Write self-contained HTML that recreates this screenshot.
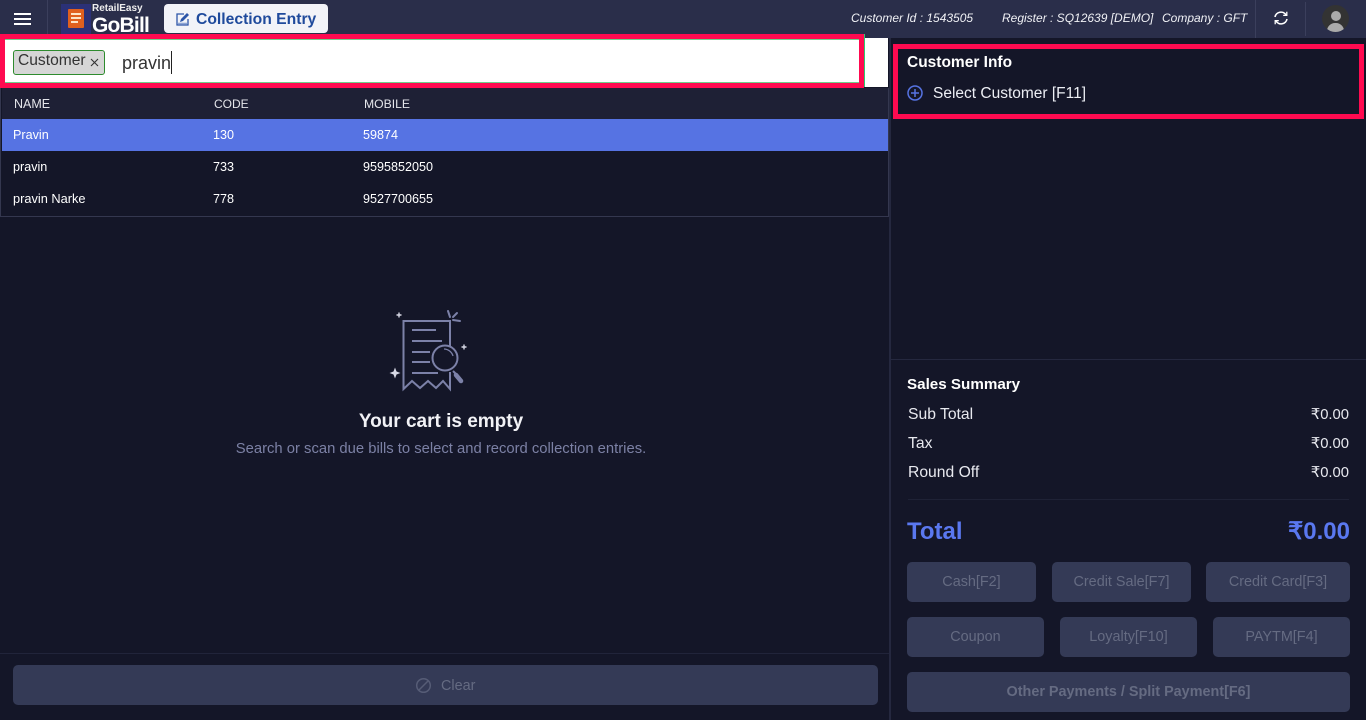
<!DOCTYPE html>
<html><head><meta charset="utf-8"><title>Collection Entry</title>
<style>
html,body{margin:0;padding:0;width:1366px;height:720px;overflow:hidden;background:#141628;font-family:"Liberation Sans",sans-serif;color:#fff}
.a{position:absolute}
.t{position:absolute;white-space:nowrap;line-height:20px}
.btn{position:absolute;background:#343a56;border-radius:5px;color:#656b82;font-size:14.4px;text-align:center;height:40px;line-height:40px;white-space:nowrap}
.r{position:absolute;white-space:nowrap;line-height:20px;text-align:right;right:17px;font-size:14.8px;color:#e8e9ef}
</style></head><body>
<div class="a" style="left:0;top:0;width:1366px;height:38px;background:#2a2e4a"></div>
<div class="a" style="left:47px;top:0;width:1px;height:34px;background:#3b3f5c"></div>
<div class="a" style="left:14px;top:13px;width:17px;height:2px;background:#fff"></div>
<div class="a" style="left:14px;top:18px;width:17px;height:2px;background:#fff"></div>
<div class="a" style="left:14px;top:23px;width:17px;height:2px;background:#fff"></div>
<div class="a" style="left:61px;top:4px;width:30px;height:30px;background:#2b3177"></div>
<div class="a" style="left:68px;top:9px;width:16px;height:19px;background:#e0601f;border-radius:1px"></div>
<div class="a" style="left:71px;top:13px;width:10px;height:2px;background:#fde4c8"></div>
<div class="a" style="left:71px;top:17px;width:10px;height:2px;background:#fde4c8"></div>
<div class="a" style="left:71px;top:21px;width:7px;height:2px;background:#fde4c8"></div>
<div class="t" style="left:92px;top:-1px;font-size:10px;font-weight:bold;color:#eee">RetailEasy</div>
<div class="t" style="left:92px;top:16px;font-size:21px;font-weight:bold;letter-spacing:-.8px;color:#fff">GoBill</div>
<div class="a" style="left:164px;top:4px;width:164px;height:29px;background:#f2f3f8;border-radius:4px"></div>
<svg class="a" style="left:175px;top:11px" width="16" height="16" viewBox="0 0 16 16" fill="none"><path d="M13 8v6H2V3h7" stroke="#2c55a8" stroke-width="1.3"/><path d="M5 11l1-3 6-6 2 2-6 6z" fill="#2c55a8"/><path d="M3 12.5h9" stroke="#8fa5d4" stroke-width="1.6"/></svg>
<div class="t" style="left:196px;top:10px;font-size:15.7px;font-weight:bold;color:#1f4a9c">Collection Entry</div>
<div class="t" style="left:851px;top:8px;font-size:12px;font-style:italic;color:#f0f1f5">Customer Id : 1543505</div>
<div class="t" style="left:1002px;top:8px;font-size:12px;font-style:italic;color:#f0f1f5">Register : SQ12639 [DEMO]</div>
<div class="t" style="left:1162px;top:8px;font-size:12px;font-style:italic;color:#f0f1f5">Company : GFT</div>
<div class="a" style="left:1255px;top:0;width:1px;height:38px;background:#3b3f5c"></div>
<div class="a" style="left:1305px;top:2px;width:1px;height:34px;background:#3b3f5c"></div>
<svg class="a" style="left:1273px;top:10px" width="16" height="16" viewBox="0 0 16 16" fill="none" stroke="#fff" stroke-width="1.6"><path d="M2 7a6 6 0 0 1 11-2"/><path d="M14 9a6 6 0 0 1-11 2"/><path d="M13.8 1.8v3.6h-3.6M2.2 14.2v-3.6h3.6" stroke-width="1.3"/></svg>
<div class="a" style="left:1322px;top:5px;width:27px;height:27px;border-radius:50%;background:#333;overflow:hidden">
<div class="a" style="left:9px;top:6px;width:10px;height:10px;border-radius:50%;background:#aaa"></div>
<div class="a" style="left:5px;top:18px;width:17px;height:12px;border-radius:8px 8px 0 0;background:#aaa"></div></div>

<div class="a" style="left:864px;top:38px;width:24px;height:49px;background:#fff"></div>
<div class="a" style="left:864px;top:34px;width:1px;height:53px;background:#2ecc71"></div>
<div class="a" style="left:0;top:34px;width:864px;height:54px;background:#ff0a50"></div>
<div class="a" style="left:5px;top:39px;width:854px;height:44px;background:#fff;border-top:1px solid #6fd08c;border-bottom:1px solid #6fd08c;box-sizing:border-box"></div>
<div class="a" style="left:13px;top:50px;width:90px;height:23px;background:#d6d6d6;border:1px solid #2e8b2e;border-radius:3px"></div>
<div class="t" style="left:18px;top:51px;font-size:15.6px;color:#333">Customer</div>
<svg class="a" style="left:90px;top:58px" width="9" height="9" viewBox="0 0 9 9" stroke="#333" stroke-width="1.1"><path d="M1 1l7 7M8 1l-7 7"/></svg>
<div class="t" style="left:122px;top:53px;font-size:18px;color:#333">pravin</div>
<div class="a" style="left:171px;top:51px;width:1px;height:23px;background:#222"></div>

<div class="a" style="left:0;top:88px;width:889px;height:129px;box-sizing:border-box;border:1px solid #34374f;border-top:0;background:#141628"></div>
<div class="a" style="left:2px;top:88px;width:886px;height:31px;background:#1e2035"></div>
<div class="a" style="left:2px;top:119px;width:886px;height:32px;background:#5673e3"></div>
<div class="t" style="left:14px;top:94px;font-size:12.5px;color:#e4e5ea">NAME</div>
<div class="t" style="left:214px;top:94px;font-size:12px;color:#e4e5ea">CODE</div>
<div class="t" style="left:364px;top:94px;font-size:12.2px;color:#e4e5ea">MOBILE</div>
<div class="t" style="left:13px;top:125px;font-size:12.6px;color:#fff">Pravin</div>
<div class="t" style="left:213px;top:125px;font-size:12.6px;color:#fff">130</div>
<div class="t" style="left:363px;top:125px;font-size:12.6px;color:#fff">59874</div>
<div class="t" style="left:13px;top:157px;font-size:12.6px">pravin</div>
<div class="t" style="left:213px;top:157px;font-size:12.6px">733</div>
<div class="t" style="left:363px;top:157px;font-size:12.6px">9595852050</div>
<div class="t" style="left:13px;top:189px;font-size:12.8px">pravin Narke</div>
<div class="t" style="left:213px;top:189px;font-size:12.6px">778</div>
<div class="t" style="left:363px;top:189px;font-size:12.6px">9527700655</div>

<svg class="a" style="left:370px;top:300px" width="110" height="100" viewBox="0 0 110 100" fill="none" stroke="#7c81a8" stroke-width="2">
<path d="M80 46V21H33.500V89L42 81l8 7 8-7 8 7 7-7 7 8V72"/>
<path d="M42 30h24M42 41h30M42 52h18M42 62h18M42 73h26"/>
<circle cx="75" cy="58" r="12.500"/>
<path d="M74 49a9.500 9.500 0 0 1 9 7" stroke-width="1.300"/>
<path d="M83 71l3 3" stroke-width="2"/>
<path d="M86 75l5 6" stroke-width="4.500" stroke-linecap="round"/>
<path d="M78 11l2 6M87 13l-4 4M90 21l-7-1" stroke-width="2" stroke-linecap="round"/>
<path d="M29 12.500v5M26.500 15h5M94 44.500v5M91.500 47h5" stroke="#d8d9e6" stroke-width="1.400"/>
<path d="M25 67.500l1.500 4 4 1.500-4 1.500-1.500 4-1.500-4-4-1.500 4-1.500z" fill="#d8d9e6" stroke="none"/>
</svg>
<div class="t" style="left:0;top:412px;width:882px;text-align:center;font-size:19px;font-weight:bold;color:#f2f2f6">Your cart is empty</div>
<div class="t" style="left:0;top:439px;width:882px;text-align:center;font-size:14.8px;color:#7c81a5">Search or scan due bills to select and record collection entries.</div>

<div class="a" style="left:0;top:653px;width:889px;height:1px;background:#21243a"></div>
<div class="a" style="left:13px;top:665px;width:865px;height:40px;background:#343a56;border-radius:5px"></div>
<svg class="a" style="left:415px;top:677px" width="17" height="17" viewBox="0 0 17 17" fill="none" stroke="#565c76" stroke-width="1.500"><circle cx="8.500" cy="8.500" r="6.800"/><path d="M4 13L13 4"/></svg>
<div class="t" style="left:441px;top:676px;font-size:14.400px;color:#656b82">Clear</div>

<div class="a" style="left:889px;top:38px;width:2px;height:682px;background:#25283f"></div>
<div class="a" style="left:893px;top:44px;width:461px;height:65px;border:5px solid #ff0a50"></div>
<div class="t" style="left:907px;top:53px;font-size:15.500px;font-weight:bold;color:#fff">Customer Info</div>
<svg class="a" style="left:906px;top:84px" width="18" height="18" viewBox="0 0 18 18" fill="none" stroke="#5673e3" stroke-width="1.500"><circle cx="9" cy="9" r="7"/><path d="M9 5v8M5 9h8"/></svg>
<div class="t" style="left:933px;top:84px;font-size:15.500px;color:#eceef4">Select Customer [F11]</div>

<div class="a" style="left:891px;top:359px;width:475px;height:1px;background:#25283f"></div>
<div class="t" style="left:907px;top:375px;font-size:15.200px;font-weight:bold;color:#fff">Sales Summary</div>
<div class="t" style="left:908px;top:405px;font-size:15.700px;color:#e8e9ef">Sub Total</div>
<div class="t" style="left:908px;top:434px;font-size:15.700px;color:#e8e9ef">Tax</div>
<div class="t" style="left:908px;top:463px;font-size:15.700px;color:#e8e9ef">Round Off</div>
<div class="r" style="top:405px">₹0.00</div>
<div class="r" style="top:434px">₹0.00</div>
<div class="r" style="top:463px">₹0.00</div>
<div class="a" style="left:908px;top:499px;width:441px;height:1px;background:#1f2236"></div>
<div class="t" style="left:907px;top:522px;font-size:24px;font-weight:bold;color:#5a78f0">Total</div>
<div class="r" style="top:522px;right:16px;font-size:24px;font-weight:bold;color:#5a78f0">₹0.00</div>

<div class="btn" style="left:907px;top:562px;width:129px">Cash[F2]</div>
<div class="btn" style="left:1052px;top:562px;width:139px">Credit Sale[F7]</div>
<div class="btn" style="left:1206px;top:562px;width:144px">Credit Card[F3]</div>
<div class="btn" style="left:907px;top:617px;width:137px">Coupon</div>
<div class="btn" style="left:1060px;top:617px;width:137px">Loyalty[F10]</div>
<div class="btn" style="left:1213px;top:617px;width:137px">PAYTM[F4]</div>
<div class="btn" style="left:907px;top:672px;width:443px;font-weight:bold">Other Payments / Split Payment[F6]</div>
</body></html>
